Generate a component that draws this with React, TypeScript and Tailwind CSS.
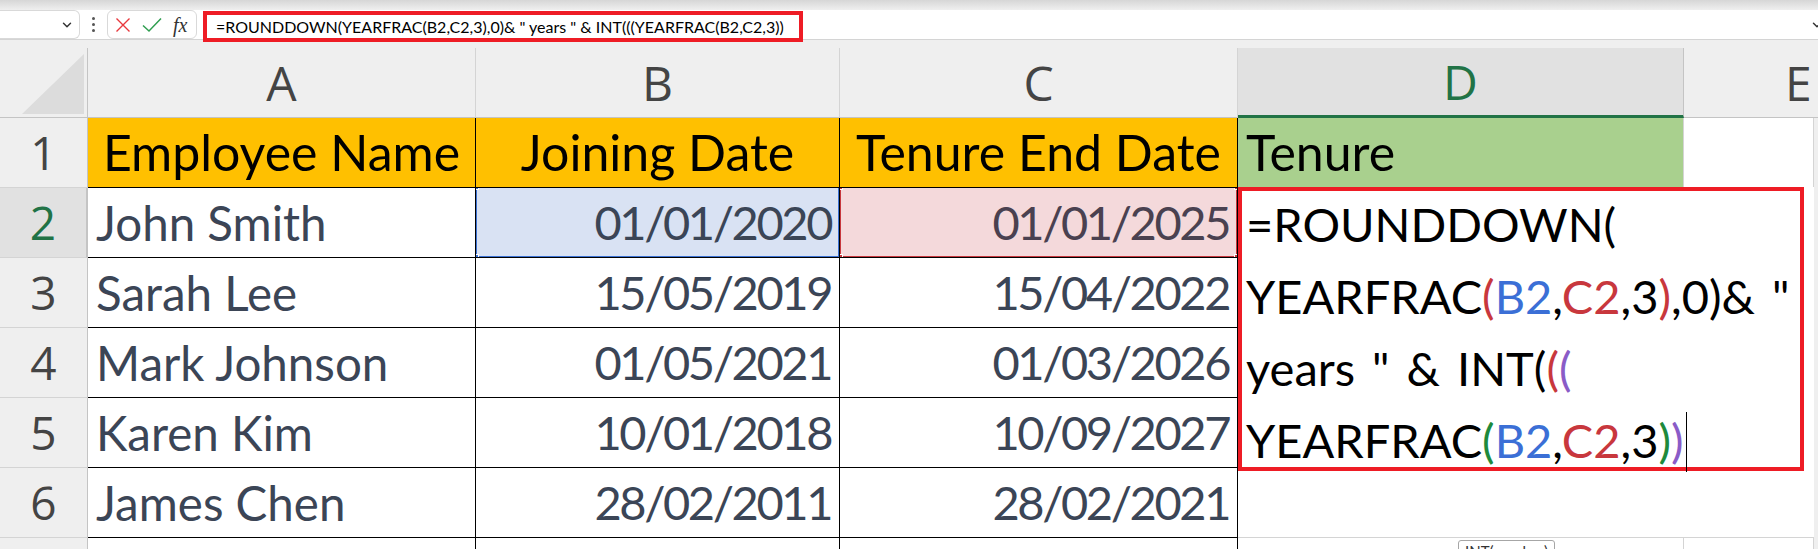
import { ChevronDown } from "lucide-react";

const rows = [
  { n: 2, name: "John Smith", join: "01/01/2020", end: "01/01/2025" },
  { n: 3, name: "Sarah Lee", join: "15/05/2019", end: "15/04/2022" },
  { n: 4, name: "Mark Johnson", join: "01/05/2021", end: "01/03/2026" },
  { n: 5, name: "Karen Kim", join: "10/01/2018", end: "10/09/2027" },
  { n: 6, name: "James Chen", join: "28/02/2011", end: "28/02/2021" },
];

const formula = '=ROUNDDOWN(YEARFRAC(B2,C2,3),0)& " years " & INT(((YEARFRAC(B2,C2,3))';

function Handle({ className }: { className: string }) {
  return <span className={`absolute w-[7px] h-[7px] border border-white ${className}`} />;
}

function FormulaBar() {
  return (
    <div className="flex h-[30px] items-start bg-white border-b border-[#d4d4d4]">
      {/* name box, scrolled off to the left */}
      <div className="flex h-[29px] w-[80px] items-center justify-end rounded-r-md border border-l-0 border-[#d9d9d9] pr-[5px]">
        <ChevronDown className="h-[14px] w-[14px] text-[#333]" strokeWidth={2.5} />
      </div>
      <div className="flex w-[27px] flex-col items-center justify-center gap-[3px] h-[29px]">
        <span className="h-[3px] w-[3px] rounded-full bg-[#555]" />
        <span className="h-[3px] w-[3px] rounded-full bg-[#555]" />
        <span className="h-[3px] w-[3px] rounded-full bg-[#555]" />
      </div>
      <div className="flex h-[29px] w-[90px] items-center gap-[11px] rounded-md border border-[#d9d9d9] pl-[7px]">
        <svg viewBox="0 0 16 16" className="h-[16px] w-[16px]">
          <path d="M1.5 1.5L14.5 14.5M14.5 1.5L1.5 14.5" stroke="#e8383d" strokeWidth="1.4" fill="none" />
        </svg>
        <svg viewBox="0 0 20 16" className="h-[16px] w-[20px]">
          <path d="M1 8.5L7 14L19 1.5" stroke="#2f9e50" strokeWidth="1.5" fill="none" />
        </svg>
        <span className="font-['Liberation_Serif',serif] text-[20px] italic leading-none text-[#333]">fx</span>
      </div>
      <div className="ml-[6px] mt-[1px] flex h-[31px] w-[600px] items-center border-4 border-[#ee1c25] pl-[9px] font-['Lato',sans-serif] text-[16px] text-black whitespace-pre">
        {formula}
      </div>
      <div className="flex-1" />
      <ChevronDown className="mr-[-6px] mt-[8px] h-[14px] w-[14px] text-[#333]" strokeWidth={2.5} />
    </div>
  );
}

function ColumnHeaders() {
  const letter = "font-['Open_Sans',sans-serif] text-[48px] text-[#444] text-center";
  return (
    <div className="flex h-[70px] bg-[#efefef]">
      <div className="flex w-[88px] shrink-0 items-end justify-end border-r border-b border-[#c4c4c4] pb-[3px] pr-[3px]">
        <svg viewBox="0 0 62 60" className="h-[60px] w-[62px]">
          <polygon points="62,0 62,60 0,60" fill="#dcdcdc" />
        </svg>
      </div>
      <div className={`w-[388px] shrink-0 border-r border-b border-r-[#d4d4d4] border-b-[#c4c4c4] leading-[69px] ${letter}`}>A</div>
      <div className={`w-[364px] shrink-0 border-r border-b border-r-[#d4d4d4] border-b-[#c4c4c4] leading-[69px] ${letter}`}>B</div>
      <div className={`w-[398px] shrink-0 border-r border-b border-r-[#d4d4d4] border-b-[#c4c4c4] leading-[69px] ${letter}`}>C</div>
      <div className="w-[446px] shrink-0 border-r border-r-[#c4c4c4] border-b-[3px] border-b-[#217346] bg-[#e1e1e1] text-center font-['Open_Sans',sans-serif] text-[48px] leading-[67px] text-[#217346]">
        D
      </div>
      <div className="flex-1 border-b border-b-[#c4c4c4] pl-[101px] font-['Open_Sans',sans-serif] text-[48px] leading-[69px] text-[#444]">
        E
      </div>
    </div>
  );
}

const cellBase = "font-['Lato',sans-serif] leading-[69px] whitespace-nowrap overflow-hidden";
const rowHead =
  "w-[88px] shrink-0 border-r border-b border-r-[#c4c4c4] border-b-[#d4d4d4] text-center font-['Open_Sans',sans-serif] text-[46px] leading-[69px]";

function HeaderRow() {
  const head = `shrink-0 border-r border-b border-black bg-[#ffc000] text-center text-black text-[50px] ${cellBase}`;
  return (
    <div className="flex h-[70px]">
      <div className={`${rowHead} bg-[#efefef] text-[#444]`}>1</div>
      <div className={`w-[388px] ${head}`}>Employee Name</div>
      <div className={`w-[364px] ${head}`}>Joining Date</div>
      <div className={`w-[398px] ${head}`}>Tenure End Date</div>
      <div className={`w-[446px] shrink-0 border-r border-b border-r-[#d4d4d4] border-b-[#a9d08e] bg-[#a9d08e] pl-[8px] text-[50px] text-black ${cellBase}`}>
        Tenure
      </div>
      <div className="w-[130px] shrink-0 border-r border-b border-[#d4d4d4] bg-white" />
      <div className="flex-1 bg-[#efefef]" />
    </div>
  );
}

function DataRow({ r }: { r: (typeof rows)[number] }) {
  const active = r.n === 2;
  const date = `relative w-[364px] shrink-0 border-r border-b border-black pr-[8px] text-right text-[47px] tracking-[-2.4px] ${cellBase}`;
  return (
    <div className="flex h-[70px]">
      <div
        className={
          active
            ? `${rowHead} border-r-2 border-r-[#217346] bg-[#e1e1e1] text-[#217346]`
            : `${rowHead} bg-[#efefef] text-[#444]`
        }
      >
        {r.n}
      </div>
      <div className={`w-[388px] shrink-0 border-r border-b border-black bg-white pl-[8px] text-[47.5px] text-[#3b4556] ${cellBase}`}>
        {r.name}
      </div>
      <div className={`${date} text-[#3b4556] ${active ? "bg-[#d9e2f3]" : "bg-white"}`}>
        {r.join}
        {active && (
          <>
            <span className="absolute -left-[1px] -top-[2px] -right-[1px] -bottom-[1px] border-2 border-[#3b72d4]" />
            <Handle className="-left-[4px] -top-[5px] bg-[#3b72d4]" />
            <Handle className="-left-[4px] -bottom-[4px] bg-[#3b72d4]" />
          </>
        )}
      </div>
      <div className={`${date} !w-[398px] ${active ? "bg-[#f4d9db] text-[#4a4150]" : "bg-white text-[#3b4556]"}`}>
        {r.end}
        {active && (
          <>
            <span className="absolute -left-[1px] -top-[2px] -right-[1px] -bottom-[1px] border-2 border-[#c8373d]" />
            <Handle className="-left-[4px] -top-[5px] bg-[#c8373d]" />
            <Handle className="-left-[4px] -bottom-[4px] bg-[#c8373d]" />
            <Handle className="-right-[4px] -top-[5px] bg-[#c8373d]" />
            <Handle className="-right-[4px] -bottom-[4px] bg-[#c8373d]" />
          </>
        )}
      </div>
      <div className="w-[446px] shrink-0 border-r border-b border-[#d4d4d4] bg-white" />
      <div className="w-[130px] shrink-0 border-r border-b border-[#d4d4d4] bg-white" />
      <div className="flex-1 bg-[#efefef]" />
    </div>
  );
}

function LastRow() {
  return (
    <div className="flex h-[12px]">
      <div className="w-[88px] shrink-0 border-r border-[#c4c4c4] bg-[#efefef]" />
      <div className="w-[388px] shrink-0 border-r border-black bg-white" />
      <div className="w-[364px] shrink-0 border-r border-black bg-white" />
      <div className="w-[398px] shrink-0 border-r border-black bg-white" />
      <div className="w-[446px] shrink-0 border-r border-[#d4d4d4] bg-white" />
      <div className="w-[130px] shrink-0 border-r border-[#d4d4d4] bg-white" />
      <div className="flex-1 bg-[#efefef]" />
    </div>
  );
}

function EditBox() {
  const red = "text-[#c8373d]";
  const blue = "text-[#3b6fd6]";
  const green = "text-[#1e8a3c]";
  const purple = "text-[#8a5cc7]";
  return (
    <div className="absolute left-[1238px] top-[187px] h-[350px] w-[576px] bg-white">
      <div className="h-[284px] w-[566px] border-4 border-[#ee1c25] pl-[4px] font-['Lato',sans-serif] text-[47px] leading-[72px] text-black whitespace-pre [word-spacing:5px]">
        <div className="-mt-[3px]">
          <div>=ROUNDDOWN(</div>
          <div>
            YEARFRAC<span className={red}>(</span>
            <span className={blue}>B2</span>,<span className={red}>C2</span>,3<span className={red}>)</span>
            {',0)& "'}
          </div>
          <div>
            {'years " & INT('}
            <span className={red}>(</span>
            <span className={purple}>(</span>
          </div>
          <div className="flex items-center">
            <span>
              YEARFRAC<span className={green}>(</span>
              <span className={blue}>B2</span>,<span className={red}>C2</span>,3<span className={green}>)</span>
              <span className={purple}>)</span>
            </span>
            <span className="ml-[2px] mt-[4px] h-[60px] w-px bg-black" />
          </div>
        </div>
      </div>
    </div>
  );
}

export default function App() {
  return (
    <div className="relative h-[549px] w-[1818px] overflow-hidden bg-[#efefef]">
      <div className="h-[10px] bg-linear-to-b from-[#d6d6d6] to-[#efefef]" />
      <FormulaBar />
      <div className="h-[8px]" />
      <ColumnHeaders />
      <HeaderRow />
      {rows.map((r) => (
        <DataRow key={r.n} r={r} />
      ))}
      <LastRow />
      <EditBox />
      <div className="absolute left-[1458px] top-[540px] h-[22px] rounded-[3px] border border-[#a6a6a6] bg-white px-[6px] font-['Lato',sans-serif] text-[15px] leading-[20px] text-[#333]">
        INT(number)
      </div>
    </div>
  );
}
